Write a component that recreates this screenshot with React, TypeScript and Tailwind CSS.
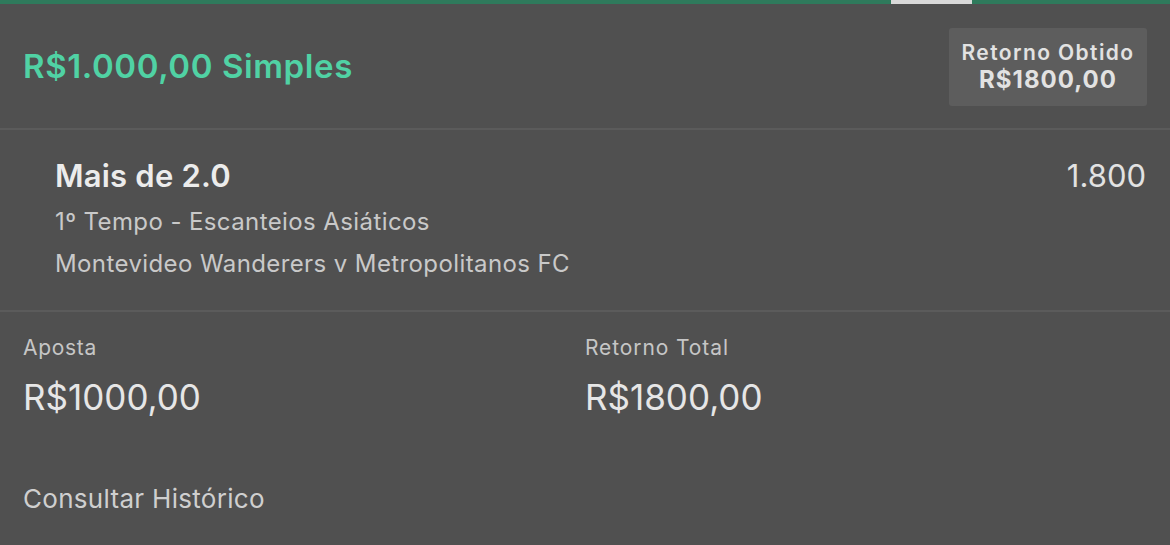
import React from "react";

export default function App() {
  return (
    <div
      className="w-[1170px] h-[545px] bg-[#505050] overflow-hidden flex flex-col"
      style={{ fontFamily: "Inter, 'Noto Sans', sans-serif" }}
    >
      {/* top progress bar */}
      <div className="h-[4px] flex bg-[#2f7a5c] shrink-0">
        <div className="w-[891px]" />
        <div className="w-[81px] bg-[#d9d9d9]" />
      </div>

      {/* header */}
      <div className="h-[126px] flex items-center justify-between pl-[23px] pr-[23px] border-b-2 border-[#5b5b5b] shrink-0">
        <div className="text-[33px] font-semibold text-[#50d2a4] tracking-[0.6px] mt-[1px]">
          R$1.000,00 Simples
        </div>
        <div className="w-[198px] h-[78px] mt-[2px] bg-[#5d5d5d] rounded-[3px] flex flex-col items-center justify-center text-[#e2e2e2]">
          <div className="text-[21px] font-semibold leading-[26px] tracking-[1.4px]">Retorno Obtido</div>
          <div className="text-[24px] font-bold leading-[28px] tracking-[1px]">R$1800,00</div>
        </div>
      </div>

      {/* selection */}
      <div className="h-[182px] border-b-2 border-[#5b5b5b] flex justify-between pl-[55px] pr-[24px] pt-[26px] shrink-0">
        <div className="flex flex-col">
          <div className="text-[31px] font-semibold text-[#ececec] leading-[40px] tracking-[0.2px]">Mais de 2.0</div>
          <div className="text-[24px] text-[#c9c9c9] leading-[42px] mt-[5px] tracking-[0.4px]">1º Tempo - Escanteios Asiáticos</div>
          <div className="text-[24px] text-[#c9c9c9] leading-[42px] tracking-[0.4px]">Montevideo Wanderers v Metropolitanos FC</div>
        </div>
        <div className="text-[31px] text-[#e2e2e2] leading-[40px]">1.800</div>
      </div>

      {/* stake / return */}
      <div className="flex pl-[23px] pt-[24px]">
        <div className="w-[562px] flex flex-col">
          <div className="text-[21px] text-[#c6c6c6] leading-[24px] tracking-[0.7px]">Aposta</div>
          <div className="text-[35px] text-[#e6e6e6] leading-[48px] mt-[13px]">R$1000,00</div>
        </div>
        <div className="flex flex-col">
          <div className="text-[21px] text-[#c6c6c6] leading-[24px] tracking-[0.9px]">Retorno Total</div>
          <div className="text-[35px] text-[#e6e6e6] leading-[48px] mt-[13px]">R$1800,00</div>
        </div>
      </div>

      <div className="pl-[23px] mt-[61px] text-[26px] text-[#cfcfcf] leading-[34px] tracking-[0.3px]">
        Consultar Histórico
      </div>
    </div>
  );
}
